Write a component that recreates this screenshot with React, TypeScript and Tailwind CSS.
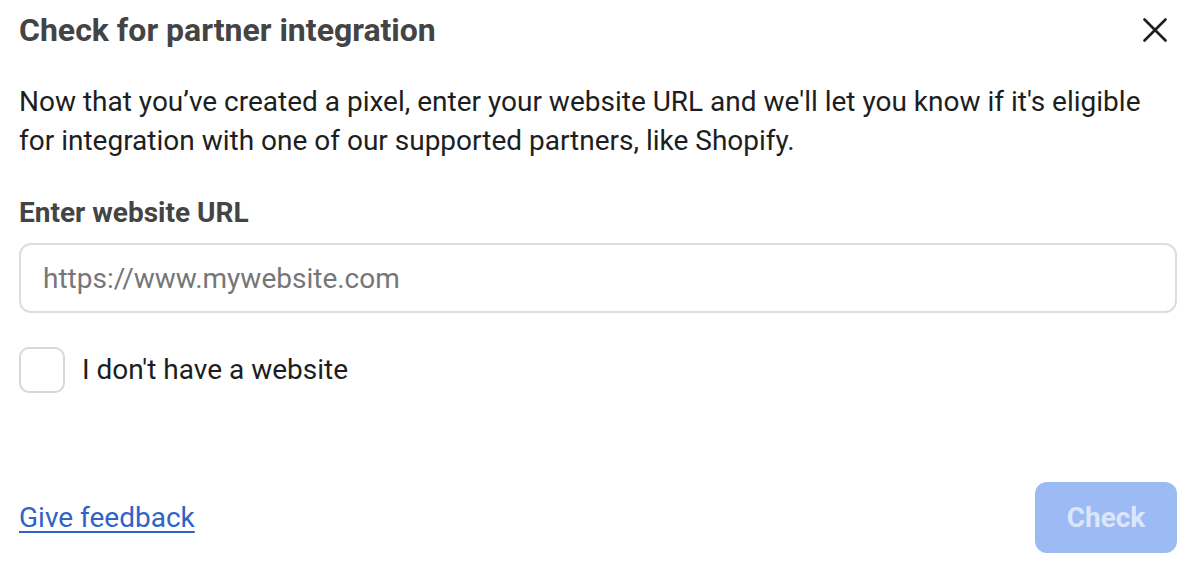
import { useState } from "react";

export default function App() {
  const [url, setUrl] = useState("");
  const [noSite, setNoSite] = useState(false);

  return (
    <div className="w-[1192px] h-[562px] bg-white font-['Roboto',sans-serif] pl-[19px] pr-[15px] flex flex-col">
      {/* header */}
      <div className="h-[60px] flex items-center justify-between">
        <h1 className="text-[32px] leading-[36px] font-bold text-[#444444]">
          Check for partner integration
        </h1>
        <button className="w-[24px] h-[24px] mr-[10px] flex items-center justify-center text-[#1c1e21]">
          <svg width="24" height="24" viewBox="0 0 24 24" fill="none">
            <path
              d="M1.5 1.5L22.5 22.5M22.5 1.5L1.5 22.5"
              stroke="currentColor"
              strokeWidth="2.6"
              strokeLinecap="round"
            />
          </svg>
        </button>
      </div>

      <p className="mt-[22px] max-w-[1145px] text-[28px] leading-[39px] text-[#1c1e21]">
        Now that you’ve created a pixel, enter your website URL and we'll let you know if it's eligible
        for integration with one of our supported partners, like Shopify.
      </p>

      <label className="mt-[37px] text-[28px] leading-[32px] font-bold text-[#444444]">
        Enter website URL
      </label>

      <input
        value={url}
        onChange={(e) => setUrl(e.target.value)}
        placeholder="https://www.mywebsite.com"
        className="mt-[14px] h-[70px] w-full rounded-[12px] border-2 border-[#dadde1] px-[22px] text-[28px] text-[#1c1e21] placeholder:text-[#767676] outline-none"
      />

      <div className="mt-[34px] flex items-center gap-[17px]">
        <button
          onClick={() => setNoSite(!noSite)}
          className="w-[46px] h-[46px] rounded-[10px] border-2 border-[#d5d8dc] bg-white"
        />
        <span className="text-[28px] leading-[32px] text-[#1c1e21]">I don't have a website</span>
      </div>

      <div className="mt-[89px] flex items-center justify-between">
        <a href="#" className="text-[28px] leading-[32px] text-[#2f63c7] underline underline-offset-[4px]">
          Give feedback
        </a>
        <button
          disabled
          className="w-[142px] h-[71px] rounded-[12px] bg-[#9cbaf3] text-[28px] font-bold text-[#dce6fb]"
        >
          Check
        </button>
      </div>
    </div>
  );
}
